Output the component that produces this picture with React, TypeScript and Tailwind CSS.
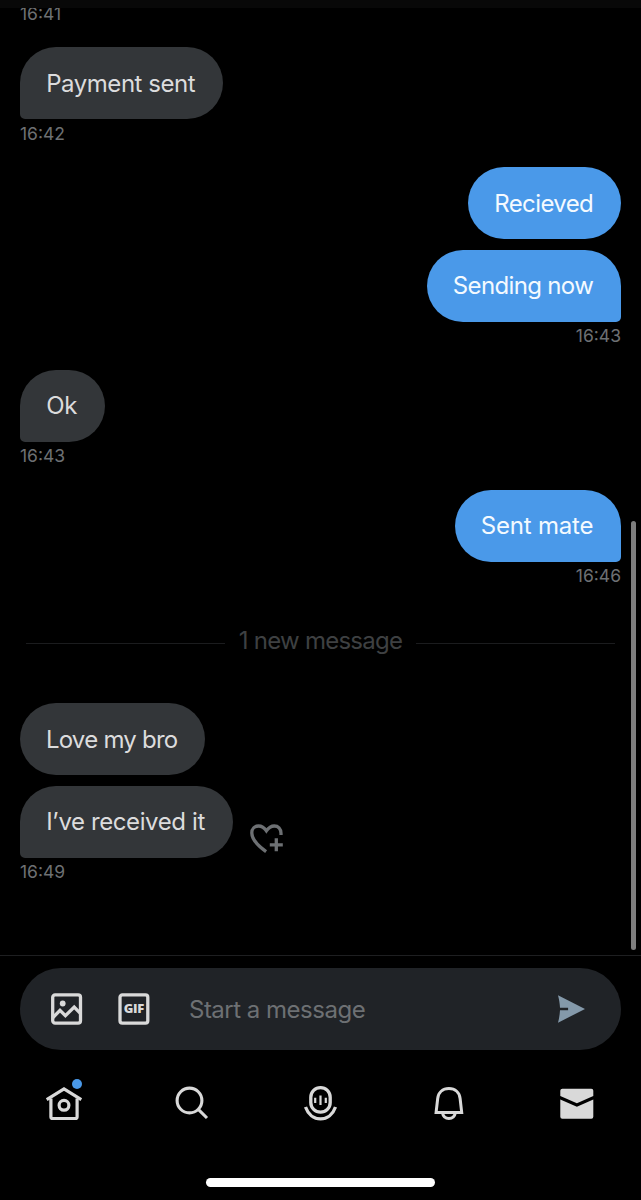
import { ReactNode } from "react";
import clsx from "clsx";

interface BubbleProps {
  mine?: boolean;
  tail?: boolean;
  className?: string;
  children: ReactNode;
}

/* ---------------- Messages ---------------- */

const Bubble = ({ mine, tail, className, children }: BubbleProps) => (
  <div
    className={clsx(
      "flex h-[72.2px] shrink-0 items-center justify-center rounded-[36px] pt-px pr-[2px] text-[24px] whitespace-nowrap",
      mine ? "self-end bg-[#4a99e9] text-[#f4faff]" : "self-start bg-[#333639] text-[#dcdcdd]",
      tail && (mine ? "rounded-br-[5px]" : "rounded-bl-[5px]"),
      className
    )}
  >
    {children}
  </div>
);

const Stamp = ({ mine, children }: { mine?: boolean; children: ReactNode }) => (
  <div
    className={clsx(
      "h-[47.9px] shrink-0 pt-[2.4px] text-[17.5px] leading-[24px] text-[#6d7073]",
      mine ? "text-right" : "text-left"
    )}
  >
    {children}
  </div>
);

const HeartPlusIcon = () => (
  <svg width="36" height="32" viewBox="0 0 36 32" fill="none" stroke="#6d7073" strokeWidth="3.3">
    <path d="M17.1 29.6C9 23.8 2.8 17.4 2.8 10.9 2.8 6.6 5.7 4 9.5 4c3.3 0 5.8 1.700 7.900 4.900C19.600 5.700 22 4 25.300 4c3.800 0 6.600 2.600 6.700 7.300V13" />
    <path d="M27.3 16.3v13M20.8 22.8h13" />
  </svg>
);

/* ---------------- Composer icons ---------------- */

const ImageIcon = () => (
  <svg width="32" height="32" viewBox="0 0 32 32" fill="none" stroke="#d9d9d9" strokeWidth="3.3">
    <rect x="1.7" y="1.9" width="27.8" height="28.2" rx="2.4" />
    <circle cx="11.7" cy="10.5" r="2.9" fill="#d9d9d9" stroke="none" />
    <path d="M2 24.5l7-7.2 5.4 5.3 8.8-8.6 6.4 6.7" />
  </svg>
);

const GifIcon = () => (
  <svg width="32" height="32" viewBox="0 0 32 32" fill="none">
    <rect x="2" y="1.9" width="27.8" height="28.2" rx="2.4" stroke="#d9d9d9" strokeWidth="3.3" />
    <text
      x="15.9"
      y="20.3"
      textAnchor="middle"
      textLength="20.5"
      className="fill-[#d9d9d9] font-['Open_Sans',sans-serif] text-[13px] font-extrabold"
    >
      GIF
    </text>
  </svg>
);

const SendIcon = () => (
  <svg width="28" height="28" viewBox="0 0 28 28" fill="#8499aa">
    <path d="M0 .3L27 14 0 27.7C1 24 1.8 19.5 2 15.3H10.1V12.7H2C1.8 8.5 1 4 0 .3z" />
  </svg>
);

/* ---------------- Tab icons ---------------- */

const HomeIcon = () => (
  <svg width="40" height="40" viewBox="0 0 40 40" fill="none" stroke="#d9d9d9" strokeWidth="3.2">
    <path d="M2.7 16.6L20 5.9l17.3 10.7" />
    <path d="M6.9 15.5v18.2q0 1.8 1.8 1.8h22.6q1.8 0 1.8-1.8V15.5" />
    <circle cx="20" cy="22.3" r="4.9" />
    <circle cx="33" cy="1" r="5" fill="#4a99e9" stroke="none" />
  </svg>
);

const SearchIcon = () => (
  <svg width="40" height="40" viewBox="0 0 40 40" fill="none" stroke="#d9d9d9" strokeWidth="3.1">
    <circle cx="17.5" cy="17.5" r="12.4" />
    <path d="M26.3 26.3l8.7 8.7" />
  </svg>
);

const SpacesIcon = () => (
  <svg width="40" height="40" viewBox="0.8 0 40 40" fill="none" stroke="#d9d9d9" strokeWidth="3.3">
    <rect x="10.6" y="4.6" width="19.4" height="24.6" rx="9.7" />
    <path d="M15 14.7v5.4M20.3 12.5v9.6M25.6 14.7v5.4" strokeWidth="2.2" />
    <path d="M5.3 24c2.5 7.200 8.300 11.800 15 11.800s12.500-4.600 15-11.800" />
  </svg>
);

const BellIcon = () => (
  <svg width="40" height="40" viewBox="0.7 0 40 40" fill="none" stroke="#d9d9d9" strokeWidth="3">
    <path d="M7.8 29.4L9.4 15.5C10 9.5 14.3 5.5 20.6 5.5s10.6 4 11.2 10l1.6 13.9z" />
    <path d="M14.2 30c.6 3.200 3 5.500 6.400 5.500s5.800-2.300 6.400-5.500" />
  </svg>
);

const MailIcon = () => (
  <svg width="40" height="40" viewBox="0 0 40 40" fill="#d9d9d9">
    <path d="M3.3 7.7q0-2 2-2h29q2 0 2 2v5.4L19.9 20.2 3.3 13.1z" />
    <path d="M3.3 16.6L19.9 23.8l16.4-7.2v17.1q0 2-2 2h-29q-2 0-2-2z" />
  </svg>
);

const tabs = [HomeIcon, SearchIcon, SpacesIcon, BellIcon, MailIcon];

/* ---------------- Screen ---------------- */

const App = () => {
  return (
    <div className="relative flex h-[1200px] w-[641px] flex-col overflow-hidden bg-black font-['Inter',sans-serif]">
      <main className="flex h-[955px] shrink-0 flex-col overflow-hidden px-5">
        <div className="-mt-[0.7px] flex flex-col">
          <Stamp>16:41</Stamp>
          <Bubble tail className="w-[203.4px] tracking-[-0.45px]">Payment sent</Bubble>
          <Stamp>16:42</Stamp>
          <Bubble mine className="mb-[10.2px] w-[152.6px] tracking-[-0.6px]">Recieved</Bubble>
          <Bubble mine tail className="w-[194px] tracking-[-0.65px]">Sending now</Bubble>
          <Stamp mine>16:43</Stamp>
          <Bubble tail className="w-[85.2px] tracking-[-0.3px]">Ok</Bubble>
          <Stamp>16:43</Stamp>
          <Bubble mine tail className="w-[166px] tracking-[-0.2px]">Sent mate</Bubble>
          <Stamp mine>16:46</Stamp>

          <div className="flex h-[93.3px] items-start gap-[13px] px-[6px] pt-4">
            <span className="mt-[17px] h-px w-[199px] bg-[#1b1c1e]" />
            <span className="flex-1 text-center text-[24px] leading-[30px] tracking-[-0.75px] whitespace-nowrap text-[#3e4042]">
              1 new message
            </span>
            <span className="mt-[17px] h-px w-[199px] bg-[#1b1c1e]" />
          </div>

          <Bubble className="mb-[10.2px] w-[185.4px] tracking-[-0.75px]">Love my bro</Bubble>
          <div className="flex items-end gap-4">
            <Bubble tail className="w-[213px] tracking-[-0.4px]">I’ve received it</Bubble>
            <div className="pb-1">
              <HeartPlusIcon />
            </div>
          </div>
          <Stamp>16:49</Stamp>
        </div>
      </main>

      <footer className="flex flex-1 flex-col border-t border-[#1e1f21] pt-3">
        <div className="mx-5 flex h-[82px] shrink-0 items-center rounded-[41px] bg-[#202327] pr-[35px] pl-[31px]">
          <ImageIcon />
          <div className="ml-[35px]">
            <GifIcon />
          </div>
          <span className="mt-[2px] ml-[39px] flex-1 text-[24px] tracking-[-0.5px] text-[#6d7073]">
            Start a message
          </span>
          <SendIcon />
        </div>

        <nav className="mt-[33px] flex h-10 shrink-0">
          {tabs.map((Icon, i) => (
            <div key={i} className="flex flex-1 justify-center [&>svg]:overflow-visible">
              <Icon />
            </div>
          ))}
        </nav>

        <div className="mt-[55px] h-[9px] w-[229px] self-center rounded-full bg-white" />
      </footer>

      {/* header edge and scroll thumb sit over the list */}
      <div className="absolute inset-x-0 top-0 h-2 bg-[#080808]" />
      <div className="absolute top-[521px] right-[5px] h-[429px] w-[5px] rounded-full bg-[#7e7e7e]" />
    </div>
  );
};

export default App;
